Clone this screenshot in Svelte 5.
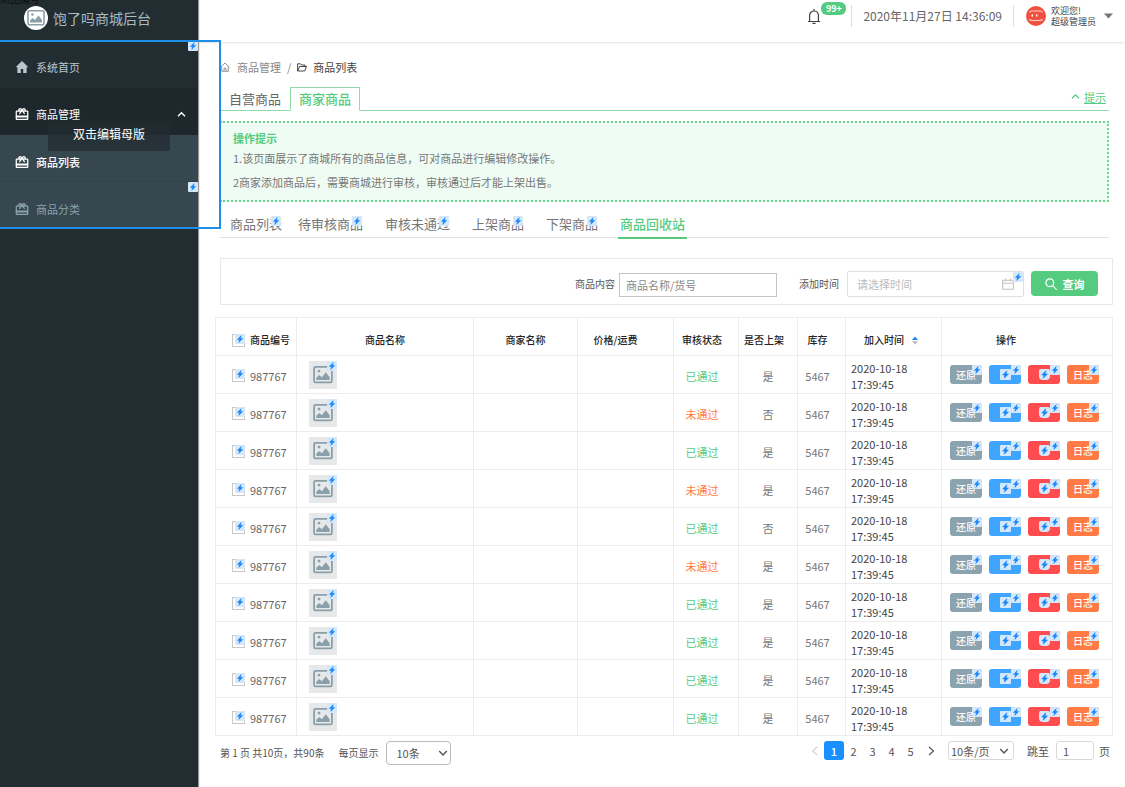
<script>
  const menu = [
    { label: '系统首页', icon: 'home', kind: 'top', badge: true },
    { label: '商品管理', icon: 'gift', kind: 'open', arrow: true },
    { label: '商品列表', icon: 'gift', kind: 'sub current' },
    { label: '商品分类', icon: 'gift', kind: 'sub', badge: true }
  ];
  const subtabs = ['商品列表', '待审核商品', '审核未通过', '上架商品', '下架商品', '商品回收站'];
  const columns = [81, 177, 104, 96, 65, 59, 48, 96, 171];
  const passed = [true, false, true, false, true, false, true, true, true, true];
  const onSale = [true, false, true, true, false, true, true, true, true, true];
  const rows = passed.map((ok, i) => ({
    id: '987767',
    ok,
    sale: onSale[i] ? '是' : '否',
    stock: '5467',
    day: '2020-10-18',
    time: '17:39:45'
  }));
  const pages = [1, 2, 3, 4, 5];
</script>

{#snippet bolt(cls = '')}
  <span class="bolt {cls}" aria-hidden="true">
    <svg viewBox="0 0 10 10"><path d="M6.2 1.6 2.4 5.5h2L3.8 8.4l3.9-3.9H5.6z" fill="#1684fc" stroke="#1684fc" stroke-width=".5" /></svg>
  </span>
{/snippet}

{#snippet picture(size)}
  <svg width={size} height={size} viewBox="0 0 18 18" aria-hidden="true">
    <rect x="1" y="1.700" width="16" height="14" rx="1.200" fill="none" stroke="#8a9fa9" stroke-width="1.600" />
    <circle cx="5.400" cy="5.500" r="1.300" fill="#8a9fa9" />
    <path d="M3 13.500v-2L5.500 9l2.500 2L11.500 6.500 15 11v2.500z" fill="#8a9fa9" />
  </svg>
{/snippet}

{#snippet chevron()}
  <svg class="chev" width="10" height="10" viewBox="0 0 10 10" aria-hidden="true">
    <path d="M1.2 3 5 7l3.8-4" fill="none" stroke="currentColor" stroke-width="1.4" />
  </svg>
{/snippet}

<div class="app">
  <aside>
    <span class="ghost">商品编号</span>
    <div class="brand">
      <span class="logo">{@render picture(18)}</span>
      <span>饱了吗商城后台</span>
    </div>
    <nav>
      {#each menu as item}
        <a href="#menu" class={item.kind}>
          {#if item.icon === 'home'}
            <svg width="14" height="14" viewBox="0 0 14 14"><path d="M7 1 .6 7.2h1.8V13h3.4V9h2.4v4h3.4V7.2h1.8z" fill="currentColor" /></svg>
          {:else}
            <svg width="14" height="14" viewBox="1 1 22 21"><path fill="currentColor" d="M20 6h-2.18c.11-.31.18-.65.18-1 0-1.66-1.34-3-3-3-1.05 0-1.96.54-2.5 1.35l-.5.67-.5-.68C10.96 2.54 10.05 2 9 2 7.34 2 6 3.34 6 5c0 .35.07.69.18 1H4c-1.11 0-1.99.89-1.99 2L2 19c0 1.11.89 2 2 2h16c1.11 0 2-.89 2-2V8c0-1.11-.89-2-2-2zm-5-2c.55 0 1 .45 1 1s-.45 1-1 1-1-.45-1-1 .45-1 1-1zM9 4c.55 0 1 .45 1 1s-.45 1-1 1-1-.45-1-1 .45-1 1-1zm11 15H4v-2h16v2zm0-5H4V8h5.08L7 10.83 8.62 12 11 8.76l1-1.36 1 1.36L15.38 12 17 10.83 14.92 8H20v6z" /></svg>
          {/if}
          <span>{item.label}</span>
          {#if item.arrow}
            <svg class="arrow" width="9" height="9" viewBox="0 0 9 9"><path d="M1 6.3 4.5 2.8 8 6.3" fill="none" stroke="currentColor" stroke-width="1.4" /></svg>
          {/if}
          {#if item.badge}{@render bolt('corner')}{/if}
        </a>
      {/each}
      <span class="outline"></span>
      <span class="tooltip" role="tooltip">双击编辑母版</span>
    </nav>
  </aside>

  <div class="page">
    <header>
      <button class="bell" aria-label="通知">
        <svg width="14" height="17" viewBox="0 0 14 17"><path d="M1 13.5h12M2.6 13.2V7.4a4.4 4.4 0 0 1 8.8 0v5.8M7 1v2M5.4 15.3h3.2" fill="none" stroke="#444" stroke-width="1.2" /></svg>
        <span class="count">99+</span>
      </button>
      <time>2020年11月27日 14:36:09</time>
      <button class="user">
        <svg width="20" height="20" viewBox="0 0 20 20" aria-hidden="true">
          <circle cx="10" cy="10" r="10" fill="#f0503f" />
          <path d="M3.500 6.500Q4 5 6 5h8q2 0 2.500 1.500M3.500 13Q4 14.500 6 14.500h8q2 0 2.500-1.500" fill="none" stroke="#fbd0cb" stroke-width="1.200" />
          <path d="M5.500 8.500h1.500v2H5.500zM10 8.500h1.500v2H10z" fill="#fff" />
        </svg>
        <span class="who">欢迎您!<br />超级管理员</span>
        <svg width="9" height="6" viewBox="0 0 9 6" aria-hidden="true"><path d="M0 .5h9L4.500 5.500z" fill="#777" /></svg>
      </button>
    </header>

    <main>
      <div class="crumbs">
        <svg width="11" height="10" viewBox="0 0 11 10"><path d="M.5 5.200 5 1l4.500 4.200M1.700 4.500v4.800h6.600V4.500M4 9V6.300h2V9" fill="none" stroke="#888" stroke-width=".9" /></svg>
        <a href="#goods">商品管理</a>
        <i>/</i>
        <svg width="10" height="9" viewBox="0 0 10 9"><path d="M8 3.500V2H4.600L3.500.800H.600v7.200h7.200l1.700-4.500H2.500L.900 7.800" fill="none" stroke="#333" stroke-width=".9" /></svg>
        <b>商品列表</b>
      </div>

      <div class="tabs">
        <button>自营商品</button>
        <button class="on">商家商品</button>
        <a class="fold" href="#tips">
          <svg width="9" height="9" viewBox="0 0 9 9"><path d="M1 6.300 4.500 2.800 8 6.300" fill="none" stroke="currentColor" stroke-width="1.300" /></svg>
          <u>提示</u>
        </a>
      </div>

      <section class="tips">
        <h2>操作提示</h2>
        <p>1.该页面展示了商城所有的商品信息，可对商品进行编辑修改操作。</p>
        <p>2商家添加商品后，需要商城进行审核，审核通过后才能上架出售。</p>
      </section>

      <div class="subtabs">
        {#each subtabs as tab, i}
          <button class:on={i === 5}>{tab}{#if i < 5}{@render bolt('over')}{/if}</button>
        {/each}
      </div>

      <form class="filter" onsubmit={(e) => e.preventDefault()}>
        <label for="kw">商品内容</label>
        <input id="kw" class="kw" type="text" placeholder="商品名称/货号" />
        <label for="when">添加时间</label>
        <span class="date">
          <input id="when" type="text" placeholder="请选择时间" />
          <svg width="12" height="12" viewBox="0 0 12 12" aria-hidden="true"><path d="M.6 2.200h10.800v9H.6zM.6 5.200h10.800M3.500.500v3M8.500.500v3" fill="none" stroke="#c4c4c4" stroke-width="1.100" /></svg>
          {@render bolt('corner')}
        </span>
        <button class="search">
          <svg width="12" height="12" viewBox="0 0 12 12" aria-hidden="true"><circle cx="4.800" cy="4.800" r="3.900" fill="none" stroke="#fff" stroke-width="1.200" /><path d="m7.600 7.600 4 4" stroke="#fff" stroke-width="1.200" /></svg>
          查询
        </button>
      </form>

      <table>
        <colgroup>
          {#each columns as w}<col style="width: {w}px" />{/each}
        </colgroup>
        <thead>
          <tr>
            <th class="id"><span class="pick"><span class="box"><input type="checkbox" aria-label="全选" />{@render bolt('corner')}</span>商品编号</span></th>
            <th>商品名称</th>
            <th>商家名称</th>
            <th class="price">价格/运费</th>
            <th class="state">审核状态</th>
            <th class="sale">是否上架</th>
            <th class="stock">库存</th>
            <th class="added">
              <span>加入时间
                <svg width="6" height="9" viewBox="0 0 6 9" aria-hidden="true"><path d="M0 4 3 .500 6 4z" fill="#1684fc" /><path d="M0 5.200h6L3 8.700z" fill="#bbb" /></svg>
              </span>
            </th>
            <th class="act">操作</th>
          </tr>
        </thead>
        <tbody>
          {#each rows as row}
            <tr>
              <td class="id"><span class="pick"><span class="box"><input type="checkbox" aria-label="选择商品" />{@render bolt('corner')}</span>{row.id}</span></td>
              <td class="pic"><span class="thumb">{@render picture(20)}{@render bolt('corner')}</span></td>
              <td></td>
              <td></td>
              <td class="state" class:ok={row.ok} class:bad={!row.ok}>{row.ok ? '已通过' : '未通过'}</td>
              <td class="sale">{row.sale}</td>
              <td class="stock">{row.stock}</td>
              <td class="added">{row.day}<br />{row.time}</td>
              <td class="act">
                <div class="ops">
                  <button class="gray">还原{@render bolt('corner')}</button>
                  <button class="blue" aria-label="编辑">{@render bolt('big')}{@render bolt('corner')}</button>
                  <button class="red" aria-label="删除">{@render bolt('big round')}{@render bolt('corner')}</button>
                  <button class="orange">日志{@render bolt('corner')}</button>
                </div>
              </td>
            </tr>
          {/each}
        </tbody>
      </table>

      <footer>
        <span>第 1 页 共10页，共90条</span>
        <label for="size">每页显示</label>
        <span class="drop first"><select id="size"><option>10条</option></select>{@render chevron()}</span>
        <div class="pager">
          <button class="prev" aria-label="上一页"><svg width="7" height="10" viewBox="0 0 7 10"><path d="M6 1 1.500 5 6 9" fill="none" stroke="#bbb" /></svg></button>
          {#each pages as p}<button class:on={p === 1}>{p}</button>{/each}
          <button class="next" aria-label="下一页"><svg width="7" height="10" viewBox="0 0 7 10"><path d="M1 1l4.500 4L1 9" fill="none" stroke="#555" stroke-width="1.200" /></svg></button>
          <span class="drop second"><select aria-label="每页条数"><option>10条/页</option></select>{@render chevron()}</span>
          <label for="jump">跳至</label>
          <input id="jump" type="text" value="1" />
          <span>页</span>
        </div>
      </footer>
    </main>
  </div>
</div>

<style>
  :global(body) {
    background: #fff;
  }
  .app {
    display: flex;
    min-height: 100vh;
    font-family: 'Noto Sans CJK SC', 'Noto Sans', sans-serif;
    font-size: 11px;
    line-height: 16px;
    color: #666;
  }
  .app :is(button, input, select) {
    box-sizing: border-box;
    margin: 0;
    padding: 0;
    border: 0;
    background: none;
    font: inherit;
    color: inherit;
  }
  a {
    color: inherit;
    text-decoration: none;
  }
  svg {
    display: block;
    flex: none;
  }

  .bolt {
    display: block;
    width: 10px;
    height: 10px;
    border-radius: 1px;
    background: #d4e8f9;
  }
  .bolt svg {
    width: 100%;
    height: 100%;
  }
  .bolt.corner {
    position: absolute;
    top: 0;
    right: 0;
  }
  .bolt.over {
    position: absolute;
    top: 1px;
    right: 1px;
  }
  .bolt.big {
    width: 11px;
    height: 11px;
  }
  .bolt.round {
    border-radius: 2px 2px 4px 4px;
  }

  aside {
    position: relative;
    flex: none;
    width: 198px;
    background: #222d32;
    box-shadow: 1px 0 1px #999;
  }
  .ghost {
    position: absolute;
    top: -9px;
    left: 0;
    font-size: 10px;
    color: #0a0d0f;
  }
  .brand {
    display: flex;
    align-items: center;
    gap: 5px;
    height: 41px;
    padding: 0 0 6px 24px;
    box-sizing: border-box;
    font-size: 14px;
    color: #a9bac1;
  }
  .logo {
    display: grid;
    place-items: center;
    width: 24px;
    height: 24px;
    border-radius: 50%;
    background: #fff;
  }
  nav {
    position: relative;
    display: flex;
    flex-direction: column;
  }
  nav a {
    position: relative;
    display: flex;
    align-items: center;
    gap: 7px;
    height: 47px;
    padding: 5px 12px 0 15px;
    box-sizing: border-box;
    color: #b8c7ce;
  }
  nav a.open {
    background: #1e282c;
    color: #fff;
  }
  nav a.sub {
    padding-top: 7px;
    background: #37474f;
    color: #8aa4af;
  }
  nav a.current {
    color: #fff;
    font-weight: 500;
    border-bottom: 1px solid #32424a;
  }
  .arrow {
    margin-left: auto;
  }
  .outline {
    position: absolute;
    top: -1px;
    left: -2px;
    width: 219px;
    height: 185px;
    border: 2px solid #1d8fe8;
    z-index: 3;
    pointer-events: none;
  }
  .tooltip {
    position: absolute;
    top: 77px;
    left: 48px;
    width: 122px;
    height: 33px;
    border-radius: 2px;
    background: linear-gradient(rgba(34, 45, 50, 0), rgba(34, 45, 50, 0.8) 50%);
    font-size: 12px;
    line-height: 32px;
    text-align: center;
    color: #fff;
  }

  .page {
    flex: 1;
    min-width: 0;
  }
  header {
    display: flex;
    justify-content: flex-end;
    align-items: center;
    height: 42px;
    padding: 0 12px 10px 0;
    box-sizing: border-box;
    box-shadow: 0 1px 2px #e4e4e4;
  }
  .app .bell {
    position: relative;
    padding-right: 30px;
  }
  .count {
    position: absolute;
    top: -6px;
    left: 14px;
    width: 25px;
    border-radius: 6px;
    background: #55cb80;
    font-size: 9px;
    font-weight: 700;
    line-height: 13px;
    color: #fff;
  }
  time {
    padding: 0 11px;
    border: solid #ddd;
    border-width: 0 1px;
    font-size: 12px;
    line-height: 22px;
    color: #666;
  }
  .app .user {
    display: flex;
    align-items: center;
    gap: 5px;
    padding-left: 12px;
    text-align: left;
  }
  .who {
    width: 48px;
    font-size: 9px;
    line-height: 11px;
    color: #444;
  }

  main {
    padding: 17px 12px 0 22px;
  }
  .crumbs {
    display: flex;
    align-items: center;
    gap: 6px;
    color: #888;
  }
  .crumbs i {
    font-style: normal;
  }
  .crumbs b {
    font-weight: 400;
    color: #444;
  }
  .tabs {
    display: flex;
    height: 23px;
    margin: 12px 4px 0 0;
    border-bottom: 1px solid #8fdcaa;
  }
  .app .tabs button {
    width: 70px;
    height: 24px;
    font-size: 13px;
    color: #666;
  }
  .app .tabs button.on {
    border: 1px solid #8fdcaa;
    border-bottom-color: #fff;
    background: #fff;
    color: #55cb80;
    font-weight: 500;
  }
  .fold {
    display: flex;
    align-items: center;
    gap: 4px;
    margin: 0 3px 4px auto;
    color: #55cb80;
  }
  .tips {
    margin: 10px 4px 0 0;
    padding: 7px 12px 6px;
    border: 2px dotted #6fd394;
    border-left-width: 1px;
    background: #effcf4;
    color: #777;
  }
  .tips h2 {
    margin: 0;
    font-size: 11px;
    line-height: 16px;
    color: #55cb80;
  }
  .tips p {
    margin: 0;
    line-height: 24px;
  }
  .subtabs {
    display: flex;
    gap: 22px;
    height: 22px;
    margin: 13px 4px 0 0;
    padding: 0 10px;
    border-bottom: 1px solid #e2e2e2;
  }
  .app .subtabs button {
    position: relative;
    height: 24px;
    padding-bottom: 6px;
    font-size: 13px;
    line-height: 18px;
    white-space: nowrap;
    color: #777;
  }
  .app .subtabs button:first-child {
    margin-right: -6px;
  }
  .app .subtabs button.on {
    margin: 0 -2px;
    padding: 0 2px 4px;
    border-bottom: 2px solid #55cb80;
    color: #55cb80;
    font-weight: 500;
  }
  .filter {
    display: flex;
    justify-content: flex-end;
    align-items: center;
    margin-top: 20px;
    padding: 11px 14px 7px;
    border: 1px solid #e8e8e8;
    font-size: 10px;
    color: #555;
  }
  .app .kw {
    width: 158px;
    height: 24px;
    margin: 3px 22px 0 4px;
    padding: 0 6px;
    border: 1px solid #c4c4c4;
    font-size: 11px;
  }
  .app ::placeholder {
    color: #888;
    opacity: 1;
  }
  .date {
    position: relative;
    display: flex;
    align-items: center;
    width: 177px;
    height: 26px;
    margin: 0 7px 0 8px;
    padding: 0 9px;
    box-sizing: border-box;
    border: 1px solid #e0e0e0;
    border-radius: 2px;
    font-size: 11px;
  }
  .date input {
    flex: 1;
    min-width: 0;
  }
  .date ::placeholder {
    color: #bbb;
  }
  .app .search {
    display: flex;
    justify-content: center;
    align-items: center;
    gap: 6px;
    width: 67px;
    height: 25px;
    border-radius: 4px;
    background: #55cb80;
    font-size: 11px;
    font-weight: 700;
    color: #fff;
  }

  table {
    width: calc(100% + 4px);
    margin: 12px 0 0 -5px;
    table-layout: fixed;
    border-spacing: 0;
    border: solid #ececec;
    border-width: 1px 0 0 1px;
  }
  tr {
    height: 38px;
  }
  th,
  td {
    padding: 0;
    border: solid #ececec;
    border-width: 0 1px 1px 0;
    box-sizing: border-box;
    white-space: nowrap;
  }
  th {
    padding-top: 7px;
    font-size: 10px;
    font-weight: 500;
    color: #222;
  }
  .pick {
    display: flex;
    align-items: center;
    gap: 5px;
    padding-left: 16px;
  }
  .box {
    position: relative;
    width: 13px;
    height: 13px;
  }
  .app .box input {
    display: block;
    width: 13px;
    height: 13px;
    appearance: none;
    border: 1px solid #c8c8c8;
    background: #fff;
  }
  td {
    padding-top: 2px;
  }
  td.pic {
    padding: 0 0 0 12px;
  }
  .thumb {
    position: relative;
    display: grid;
    place-items: center;
    width: 28px;
    height: 28px;
    background: #e7e8e9;
  }
  th.price {
    padding-right: 20px;
  }
  .state {
    padding-right: 8px;
    text-align: center;
  }
  .ok {
    color: #55cb80;
  }
  .bad {
    color: #ff7a45;
  }
  .sale {
    text-align: center;
  }
  th.sale {
    padding-right: 8px;
  }
  .stock {
    padding-right: 8px;
    text-align: center;
  }
  td.stock,
  td.sale {
    color: #777;
  }
  td.added {
    padding-left: 5px;
    color: #444;
  }
  th.added span {
    display: flex;
    align-items: center;
    gap: 8px;
    padding-left: 18px;
  }
  th.act {
    padding-right: 42px;
  }
  td.act {
    padding: 0 12px 0 8px;
  }
  .ops {
    display: flex;
    gap: 7px;
  }
  .app .ops button {
    position: relative;
    display: flex;
    justify-content: center;
    align-items: center;
    width: 32px;
    height: 19px;
    border-radius: 3px;
    overflow: hidden;
    font-size: 10px;
    font-weight: 500;
    color: #fff;
  }
  .app .ops .gray {
    background: #8aa3ae;
  }
  .app .ops .blue {
    background: #40a5ff;
  }
  .app .ops .red {
    background: #ff4d4f;
  }
  .app .ops .orange {
    background: #ff7a45;
  }

  footer {
    display: flex;
    align-items: center;
    margin-top: 5px;
    font-size: 10px;
    color: #555;
  }
  footer > label {
    margin: 0 8px 0 14px;
  }
  .drop {
    position: relative;
    display: flex;
    font-size: 11px;
  }
  .app .drop select {
    appearance: none;
    width: 66px;
    height: 19px;
    padding-left: 2px;
    border: 1px solid #d9d9d9;
    border-radius: 3px;
  }
  .app .first select {
    width: 65px;
    height: 24px;
    padding-left: 9px;
    border-color: #bbb;
    border-radius: 4px;
  }
  .drop .chev {
    position: absolute;
    top: 5px;
    right: 5px;
    pointer-events: none;
  }
  .drop.first .chev {
    top: 7px;
    right: 3px;
  }
  .pager {
    display: flex;
    align-items: center;
    height: 19px;
    margin: 0 3px 5px auto;
    font-size: 11px;
  }
  .app .pager button {
    display: grid;
    place-items: center;
    width: 19px;
    height: 19px;
  }
  .app .pager button.on {
    width: 20px;
    border-radius: 3px;
    background: #1890ff;
    color: #fff;
    font-weight: 500;
  }
  .app .pager .next {
    width: 22px;
  }
  .pager .second {
    margin: 0 13px 0 6px;
  }
  .app #jump {
    width: 38px;
    height: 19px;
    margin: 0 5px 0 7px;
    padding-left: 6px;
    border: 1px solid #d9d9d9;
    border-radius: 3px;
  }
</style>
